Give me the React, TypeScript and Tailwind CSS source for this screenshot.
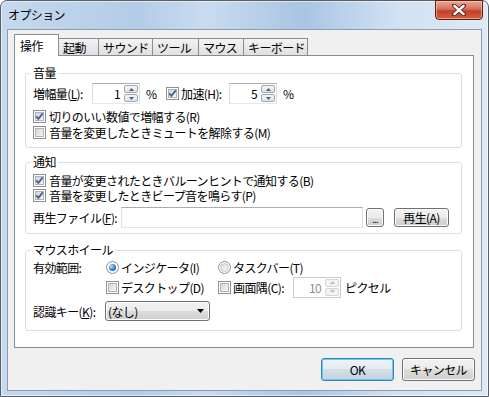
import React from "react";

const face =
  "rounded-[3px] border border-[#707070] bg-[linear-gradient(#f2f2f2_0%,#ebebeb_50%,#dddddd_50%,#cfcfcf_100%)] shadow-[inset_0_0_0_1px_#fcfcfc]";
const btn = `flex items-center justify-center ${face}`;

function Check({ on }: { on?: boolean }) {
  return (
    <span className="relative flex h-[13px] w-[13px] shrink-0 border border-[#8e8f8f] bg-white p-px">
      <span className="flex-1 border border-[#b0b4b9] bg-[linear-gradient(135deg,#d4d6d9_0%,#f7f7f7_100%)]" />
      {on && (
        <svg className="absolute left-0 top-0" width="11" height="11" viewBox="0 0 11 11">
          <path d="M2.2 5.4 L4.4 7.8 L8.8 2.4" fill="none" stroke="#4a5f97" strokeWidth="1.9" />
        </svg>
      )}
    </span>
  );
}

function Radio({ on }: { on?: boolean }) {
  return (
    <span className="flex h-[13px] w-[13px] shrink-0 items-center justify-center rounded-full border border-[#8e8f8f] bg-white">
      {on ? (
        <span className="h-[7px] w-[7px] rounded-full bg-[radial-gradient(circle_at_35%_35%,#bfe6ff_0%,#2f86d8_50%,#124f9a_100%)]" />
      ) : (
        <span className="h-[9px] w-[9px] rounded-full border border-[#c4c7cb] bg-[linear-gradient(135deg,#d6d8db,#f6f6f6)]" />
      )}
    </span>
  );
}

function SpinBtn({ up, off }: { up?: boolean; off?: boolean }) {
  return (
    <span
      className={`flex flex-1 items-center justify-center rounded-[2px] border ${
        off ? "border-[#d3d5d8] bg-[#f4f4f4]" : "border-[#a3a8ae] bg-[linear-gradient(#f6f6f6,#dde1e5)]"
      }`}
    >
      <svg width="5" height="3" viewBox="0 0 5 3">
        <path d={up ? "M0 3 L2.5 0 L5 3 Z" : "M0 0 L2.5 3 L5 0 Z"} fill={off ? "#b9bcc0" : "#4c6185"} />
      </svg>
    </span>
  );
}

function Spin({ value, off }: { value: string; off?: boolean }) {
  return (
    <div
      className={`flex h-[21px] w-[48px] shrink-0 border bg-white ${
        off ? "border-[#c9cbd0]" : "border-[#abadb3] border-x-[#dbdfe6] border-b-[#e3e9ef]"
      }`}
    >
      <span className={`flex flex-1 items-center justify-end pr-[4px] ${off ? "text-[#8d8d8d]" : ""}`}>{value}</span>
      <div className="flex w-[15px] flex-col gap-px py-px pr-px">
        <SpinBtn up off={off} />
        <SpinBtn off={off} />
      </div>
    </div>
  );
}

function Tab({ label, w, on }: { label: string; w: string; on?: boolean }) {
  return (
    <div
      className={`${w} -ml-px flex items-center border border-b-0 border-[#898c95] first:ml-0 ${
        on
          ? "relative z-10 -mb-px h-[22px] bg-white pl-[5px]"
          : "h-[17px] bg-[linear-gradient(#f3f3f3,#e0e0e0)] pl-[4px]"
      }`}
    >
      {label}
    </div>
  );
}

function Group({ title, h, mt, children }: { title: string; h: string; mt: string; children: React.ReactNode }) {
  return (
    <fieldset className={`${h} ${mt} ml-[10px] w-[437px] rounded-[3px] border border-[#d5dfe5] pl-[7px]`}>
      <legend className="ml-[-2px] px-[2px] leading-[16px]">{title}</legend>
      {children}
    </fieldset>
  );
}

export default function App() {
  return (
    <div className="relative flex h-[397px] w-[489px] flex-col whitespace-nowrap rounded-t-[7px] border border-[#5b6068] bg-[linear-gradient(90deg,#c6d9ee_0%,#b3cce7_28%,#c9dbef_42%,#a9c5e3_62%,#d2e2f3_82%,#dde9f5_100%)] font-['Noto_Sans_CJK_JP',sans-serif] text-[12px] leading-[15px] tracking-[-0.6px] text-black shadow-[inset_0_0_0_1px_rgba(255,255,255,0.55)]">
      <div className="flex h-[28px] items-center pl-[7px] pb-[1px]">オプション</div>

      <div className="absolute right-[5px] top-[-1px] flex h-[20px] w-[48px] items-center justify-center rounded-b-[4px] border border-[#5e1c12] bg-[linear-gradient(#e9a99a_0%,#d7705a_45%,#c1412a_55%,#d7603f_100%)] shadow-[inset_0_0_0_1px_rgba(255,220,210,0.5)]">
        <svg width="14" height="12" viewBox="0 0 14 12">
          <path d="M2 1.5 L12 10.5 M12 1.5 L2 10.5" stroke="#5a2a22" strokeWidth="4.2" strokeLinecap="round" />
          <path d="M2.4 1.9 L11.6 10.1 M11.6 1.9 L2.4 10.1" stroke="#ffffff" strokeWidth="2.4" strokeLinecap="round" />
        </svg>
      </div>

      <div className="mx-[6px] mb-[5px] flex flex-1 flex-col border border-[#8b9db2] bg-[#f0f0f0]">
        <div className="ml-[6px] mt-[4px] flex h-[21px] items-end">
          <Tab label="操作" w="w-[45px]" on />
          <Tab label="起動" w="w-[41px]" />
          <Tab label="サウンド" w="w-[55px]" />
          <Tab label="ツール" w="w-[47px]" />
          <Tab label="マウス" w="w-[46px]" />
          <Tab label="キーボード" w="w-[65px]" />
        </div>

        <div className="ml-[6px] flex h-[293px] w-[460px] flex-col border border-[#898c95] bg-white">
          <Group title="音量" h="h-[83px]" mt="mt-[9px]">
            <div className="mt-[2px] flex h-[21px] items-center">
              <span className="w-[59px]">
                増幅量(<span className="underline">L</span>):
              </span>
              <Spin value="1" />
              <span className="w-[26px] pl-[6px]">%</span>
              <Check on />
              <span className="ml-[2px] w-[48px]">加速(H):</span>
              <Spin value="5" />
              <span className="pl-[6px]">%</span>
            </div>
            <div className="mt-[4px] flex h-[16px] items-center gap-[3px]">
              <Check on />
              <span>切りのいい数値で増幅する(R)</span>
            </div>
            <div className="flex h-[17px] items-center gap-[3px]">
              <Check />
              <span>音量を変更したときミュートを解除する(M)</span>
            </div>
          </Group>

          <Group title="通知" h="h-[80px]" mt="mt-[6px]">
            <div className="mt-[3px] flex h-[15px] items-center gap-[3px]">
              <Check on />
              <span className="leading-[13px]">音量が変更されたときバルーンヒントで通知する(B)</span>
            </div>
            <div className="flex h-[15px] items-center gap-[3px]">
              <Check on />
              <span className="leading-[13px]">音量を変更したときビープ音を鳴らす(P)</span>
            </div>
            <div className="mt-[4px] flex h-[21px] items-center">
              <span className="w-[88px]">
                再生ファイル(<span className="underline">F</span>):
              </span>
              <div className="h-[21px] w-[242px] border border-[#abadb3] border-x-[#dbdfe6] border-b-[#e3e9ef] bg-white" />
              <div className={`${btn} ml-[3px] h-[19px] w-[18px] items-end pb-[2px] text-[9px] leading-none`}>...</div>
              <div className={`${btn} ml-[10px] h-[19px] w-[55px]`}>再生(A)</div>
            </div>
          </Group>

          <Group title="マウスホイール" h="h-[89px]" mt="mt-[8px]">
            <div className="mt-[1px] flex h-[16px] items-center">
              <span className="w-[73px]">有効範囲:</span>
              <div className="flex w-[112px] items-center gap-[2px]">
                <Radio on />
                <span>インジケータ(I)</span>
              </div>
              <div className="flex items-center gap-[2px]">
                <Radio />
                <span>タスクバー(T)</span>
              </div>
            </div>
            <div className="mt-[2px] flex h-[20px] items-center">
              <span className="w-[73px]" />
              <div className="flex w-[112px] items-center gap-[2px]">
                <Check />
                <span>デスクトップ(D)</span>
              </div>
              <Check />
              <span className="ml-[2px] w-[60px]">画面隅(C):</span>
              <Spin value="10" off />
              <span className="ml-[4px]">ピクセル</span>
            </div>
            <div className="mt-[4px] flex h-[20px] items-center">
              <span className="w-[72px]">
                認識キー(<span className="underline">K</span>):
              </span>
              <div className={`${face} flex h-[20px] w-[105px] items-center justify-between pl-[2px] pr-[5px]`}>
                <span>(なし)</span>
                <svg width="7" height="4" viewBox="0 0 7 4">
                  <path d="M0 0 L7 0 L3.5 4 Z" fill="#000" />
                </svg>
              </div>
            </div>
          </Group>
        </div>

        <div className="mt-[10px] flex justify-end gap-[8px] pr-[6px]">
          <div className="flex h-[23px] w-[73px] items-center justify-center rounded-[3px] border border-[#3c7fb1] bg-[linear-gradient(#eef4f8_0%,#e3ebf1_50%,#d3dee7_50%,#c7d3dd_100%)] shadow-[inset_0_0_0_1px_#62cdf5]">
            OK
          </div>
          <div className={`${btn} h-[23px] w-[73px]`}>キャンセル</div>
        </div>
      </div>
    </div>
  );
}
